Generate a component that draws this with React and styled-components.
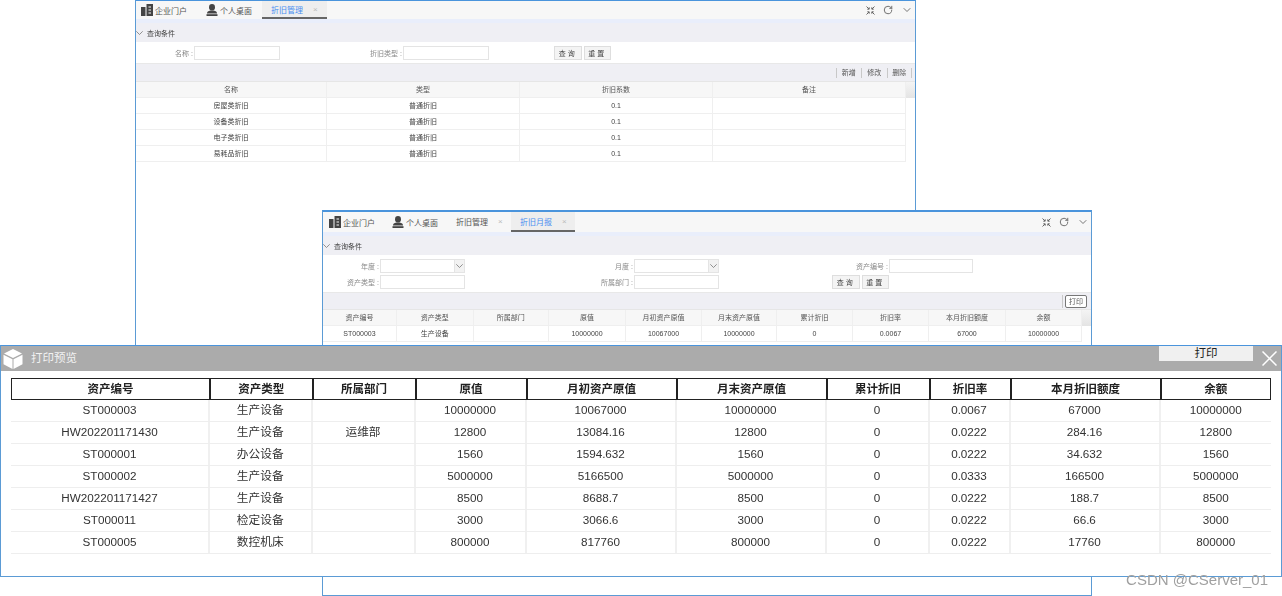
import React from "react";
import styled, { createGlobalStyle } from "styled-components";
import { ChevronDown, RotateCw } from "lucide-react";

const GlobalStyle = createGlobalStyle`
  html, body {
    margin: 0;
    padding: 0;
    background: #fff;
  }
  * {
    box-sizing: border-box;
  }
`;

const FONT = `"Liberation Sans", "Noto Sans CJK SC", sans-serif`;
const BLUE = "#5b9bd5";

const Desktop = styled.div`
  position: relative;
  width: 1282px;
  height: 596px;
  overflow: hidden;
  background: #fff;
  font-family: ${FONT};
`;

const Window = styled.div`
  position: absolute;
  left: ${(p) => p.$x}px;
  top: ${(p) => p.$y}px;
  width: ${(p) => p.$w}px;
  height: ${(p) => p.$h}px;
  display: flex;
  flex-direction: column;
  background: #fff;
  border: 1px solid ${BLUE};
  border-top: ${(p) => p.$topLine || 1}px solid #4a94dc;
  overflow: hidden;
`;

/* the screenshot was scaled down, so its small text is soft */
const WindowBody = styled.div`
  display: flex;
  flex-direction: column;
  flex: 1;
  filter: blur(${(p) => p.$blur}px);
`;

const TabBar = styled.div`
  display: flex;
  align-items: stretch;
  flex: none;
  height: ${(p) => p.$h}px;
  padding-left: ${(p) => p.$pad}px;
  background: #f7f7f7;
`;

const HomeTab = styled.div`
  display: flex;
  align-items: center;
  gap: 2px;
  margin-right: ${(p) => p.$gap}px;
  font-size: 8px;
  color: #555;
  white-space: nowrap;
`;

const Tab = styled.div`
  display: flex;
  align-items: center;
  width: ${(p) => p.$w}px;
  padding-left: 9px;
  font-size: 8px;
  white-space: nowrap;
  color: ${(p) => (p.$active ? "#4a8ff0" : "#555")};
  background: ${(p) => (p.$active ? "#eeeeee" : "transparent")};
  border-bottom: 2px solid ${(p) => (p.$active ? "#666" : "transparent")};
`;

const TabClose = styled.span`
  margin-left: 10px;
  font-size: 8px;
  color: #bbb;
`;

const TabTools = styled.div`
  display: flex;
  align-items: center;
  gap: 8px;
  margin-left: auto;
  padding-right: 2px;
  color: #666;
`;

const Stripe = styled.div`
  flex: none;
  height: 4px;
  background: #e9eefb;
`;

const SectionHead = styled.div`
  display: flex;
  align-items: center;
  flex: none;
  height: ${(p) => p.$h}px;
  gap: 4px;
  font-size: 7px;
  color: #444;
  background: #efeff4;
`;

const FormGrid = styled.div`
  display: grid;
  flex: none;
  grid-template-columns: ${(p) => p.$cols};
  grid-auto-rows: 14px;
  row-gap: 2px;
  align-content: center;
  height: ${(p) => p.$h}px;
  border-bottom: 1px solid #e8e8e8;
`;

const Field = styled.label`
  display: flex;
  align-items: center;
  justify-content: flex-end;
  gap: 1px;
  font-size: 7px;
  color: #888;
`;

const Input = styled.div`
  flex: none;
  width: ${(p) => p.$w}px;
  height: 14px;
  background: #fff;
  border: 1px solid #e4e4e4;
`;

const Select = styled(Input)`
  display: flex;
  justify-content: flex-end;
`;

const SelectArrow = styled.span`
  display: flex;
  align-items: center;
  justify-content: center;
  width: 10px;
  background: #f2f2f2;
  border-left: 1px solid #e4e4e4;
`;

const FormActions = styled.div`
  display: flex;
  gap: 2px;
  padding-left: ${(p) => p.$pad}px;
`;

const FormButton = styled.button`
  width: 27.5px;
  height: 14px;
  padding: 0;
  font-family: ${FONT};
  font-size: 7px;
  letter-spacing: 2px;
  color: #444;
  background: #f4f4f4;
  border: 1px solid #dedede;
`;

const Toolbar = styled.div`
  display: flex;
  align-items: center;
  justify-content: flex-end;
  flex: none;
  height: ${(p) => p.$h}px;
  padding-right: ${(p) => p.$pad}px;
  background: #efeff4;
  border-bottom: 1px solid #e6e6e6;
`;

const ToolLink = styled.span`
  width: 25.5px;
  height: 10px;
  font-size: 7px;
  line-height: 10px;
  text-align: center;
  color: #555;
  border-left: 1px solid #c8c8c8;
  &:last-child {
    border-right: 1px solid #c8c8c8;
  }
`;

const PrintTool = styled.div`
  display: flex;
  align-items: center;
  height: 13px;
  padding-left: 2px;
  border-left: 1px solid #c8c8c8;
`;

const PrintLink = styled.span`
  width: 22px;
  height: 13px;
  font-size: 7px;
  line-height: 11px;
  text-align: center;
  color: #555;
  background: #fff;
  border: 1px solid #777;
  border-radius: 2px;
`;

const GridWrap = styled.div`
  position: relative;
  flex: none;
`;

const ScrollCorner = styled.div`
  position: absolute;
  top: 0;
  right: 0;
  width: 9px;
  height: 16px;
  background: linear-gradient(#f4f4f4, #e4e4e4);
`;

const Row = styled.div`
  display: grid;
  grid-template-columns: ${(p) => p.$cols};
  width: max-content;
  height: 16px;
  background: ${(p) => (p.$head ? "#f7f7f7" : "#fff")};
  border-bottom: 1px solid #efefef;
`;

const Cell = styled.div`
  font-size: 7px;
  line-height: 16px;
  text-align: center;
  white-space: nowrap;
  color: ${(p) => (p.$head ? "#555" : "#444")};
  border-right: 1px solid #efefef;
`;

const ModalBar = styled.div`
  display: flex;
  align-items: flex-start;
  flex: none;
  height: 25px;
  color: #f2f2f2;
  background: #ababab;
`;

const ModalTitle = styled.div`
  align-self: center;
  margin: 0 0 3px 8px;
  font-size: 11.5px;
`;

const CubeIcon = styled.svg`
  align-self: center;
  flex: none;
  margin-left: 2px;
`;

const ModalPrint = styled.button`
  width: 94px;
  height: 16px;
  margin-left: auto;
  margin-top: -1px;
  padding: 0;
  font-family: ${FONT};
  font-size: 11.5px;
  line-height: 16px;
  color: #222;
  background: #f0f0f0;
  border: 0;
`;

const ModalClose = styled.div`
  display: flex;
  align-self: center;
  justify-content: center;
  width: 28px;
  padding-left: 4px;
`;

const PrintTable = styled.div`
  margin: 7px 10px 0;
`;

const PrintHead = styled.div`
  display: grid;
  grid-template-columns: ${(p) => p.$cols};
  height: 22px;
  border: 1px solid #222;
`;

const PrintHeadCell = styled.div`
  font-size: 11.5px;
  font-weight: 700;
  line-height: 21px;
  text-align: center;
  color: #222;
  border-right: 2px solid #222;
  &:last-child {
    border-right: 0;
  }
`;

const PrintRow = styled.div`
  display: grid;
  grid-template-columns: ${(p) => p.$cols};
  height: 22px;
  border-bottom: 1px solid #eee;
`;

const PrintCell = styled.div`
  font-size: 11.7px;
  line-height: 20px;
  text-align: center;
  white-space: nowrap;
  color: #333;
  border-right: 2px solid #f0f0f0;
  &:last-child {
    border-right: 0;
  }
`;

const Watermark = styled.div`
  position: absolute;
  right: 14px;
  top: 571px;
  font-family: ${FONT};
  font-size: 15px;
  color: #a0a0a0;
  white-space: nowrap;
`;

const BuildingIcon = () => (
  <svg width="12" height="12" viewBox="0 0 12 12" fill="#444">
    <path d="M0 3h4.500v9H0z" />
    <path d="M5.500 0H12v12H5.500z" />
    <path fill="#f7f7f7" d="M7.500 2.500h2.500v1H7.500zM7.500 5.500h2.500v1H7.500zM7.500 8.500h2.500v1H7.500z" />
  </svg>
);

const UserIcon = () => (
  <svg width="12" height="12" viewBox="0 0 12 12" fill="#444">
    <ellipse cx="6" cy="3.200" rx="3" ry="3.200" />
    <path d="M1 8.500c1-1.500 2.500-2 5-2s4 .5 5 2v1H1z" />
    <path d="M.5 10.200h11V12H.500z" />
  </svg>
);

const CompressIcon = () => (
  <svg width="9" height="9" viewBox="0 0 9 9" fill="none" stroke="#666" strokeWidth="1">
    <path d="M.5.500l2.500 2.500M3.200 1.300v1.900H1.300" />
    <path d="M8.500.500L6 3M5.800 1.300v1.900h1.900" />
    <path d="M.5 8.500L3 6M3.200 7.700V5.800H1.300" />
    <path d="M8.500 8.500L6 6M5.800 7.700V5.800h1.900" />
  </svg>
);

const SmallChevron = () => (
  <svg width="7" height="4" viewBox="0 0 7 4" fill="none" stroke="#777" strokeWidth="0.8">
    <path d="M.3.300l3.200 3.200L6.700.300" />
  </svg>
);

const Tools = () => (
  <TabTools>
    <CompressIcon />
    <RotateCw size={10} strokeWidth={2.2} />
    <ChevronDown size={12} strokeWidth={1.8} />
  </TabTools>
);

const DataRow = ({ cols, head, cells }) => (
  <Row $cols={cols} $head={head}>
    {cells.map((text, i) => (
      <Cell key={i} $head={head}>
        {text}
      </Cell>
    ))}
  </Row>
);

const DEPRECIATION_COLS = "191px 193px 193px 193px";
const DEPRECIATION_HEAD = ["名称", "类型", "折旧系数", "备注"];
const DEPRECIATION_ROWS = [
  ["房屋类折旧", "普通折旧", "0.1", ""],
  ["设备类折旧", "普通折旧", "0.1", ""],
  ["电子类折旧", "普通折旧", "0.1", ""],
  ["易耗品折旧", "普通折旧", "0.1", ""],
];

const REPORT_COLS = "74px 76.500px 75.500px 77px 76px 75px 76px 76px 77px 76px";
const REPORT_HEAD = [
  "资产编号",
  "资产类型",
  "所属部门",
  "原值",
  "月初资产原值",
  "月末资产原值",
  "累计折旧",
  "折旧率",
  "本月折旧额度",
  "余额",
];

const PRINT_COLS = "199px 102.500px 103px 111px 150px 150px 103px 81px 150px 1fr";
const PRINT_ROWS = [
  ["ST000003", "生产设备", "", "10000000", "10067000", "10000000", "0", "0.0067", "67000", "10000000"],
  ["HW202201171430", "生产设备", "运维部", "12800", "13084.16", "12800", "0", "0.0222", "284.16", "12800"],
  ["ST000001", "办公设备", "", "1560", "1594.632", "1560", "0", "0.0222", "34.632", "1560"],
  ["ST000002", "生产设备", "", "5000000", "5166500", "5000000", "0", "0.0333", "166500", "5000000"],
  ["HW202201171427", "生产设备", "", "8500", "8688.7", "8500", "0", "0.0222", "188.7", "8500"],
  ["ST000011", "检定设备", "", "3000", "3066.6", "3000", "0", "0.0222", "66.6", "3000"],
  ["ST000005", "数控机床", "", "800000", "817760", "800000", "0", "0.0222", "17760", "800000"],
];

function DepreciationWindow() {
  return (
    <Window $x={135} $y={0} $w={781} $h={400}>
      <WindowBody $blur={0.35}>
        <TabBar $h={18} $pad={5}>
          <HomeTab $gap={19}>
            <BuildingIcon />
            企业门户
          </HomeTab>
          <HomeTab $gap={10}>
            <UserIcon />
            个人桌面
          </HomeTab>
          <Tab $active $w={65}>
            折旧管理<TabClose>×</TabClose>
          </Tab>
          <Tools />
        </TabBar>
        <Stripe />
        <SectionHead $h={19}>
          <SmallChevron />
          查询条件
        </SectionHead>
        <FormGrid $cols="144px 209px auto" $h={22}>
          <Field>
            名称 :<Input $w={86} />
          </Field>
          <Field>
            折旧类型 :<Input $w={86} />
          </Field>
          <FormActions $pad={65}>
            <FormButton>查询</FormButton>
            <FormButton>重置</FormButton>
          </FormActions>
        </FormGrid>
        <Toolbar $h={18} $pad={3}>
          <ToolLink>新增</ToolLink>
          <ToolLink>修改</ToolLink>
          <ToolLink>删除</ToolLink>
        </Toolbar>
        <GridWrap>
          <ScrollCorner />
          <DataRow cols={DEPRECIATION_COLS} head cells={DEPRECIATION_HEAD} />
          {DEPRECIATION_ROWS.map((cells) => (
            <DataRow key={cells[0]} cols={DEPRECIATION_COLS} cells={cells} />
          ))}
        </GridWrap>
      </WindowBody>
    </Window>
  );
}

function ReportWindow() {
  return (
    <Window $x={322} $y={210} $w={770} $h={386} $topLine={2}>
      <WindowBody $blur={0.35}>
        <TabBar $h={20} $pad={6}>
          <HomeTab $gap={17}>
            <BuildingIcon />
            企业门户
          </HomeTab>
          <HomeTab $gap={9}>
            <UserIcon />
            个人桌面
          </HomeTab>
          <Tab $w={64}>
            折旧管理<TabClose>×</TabClose>
          </Tab>
          <Tab $active $w={64}>
            折旧月报<TabClose>×</TabClose>
          </Tab>
          <Tools />
        </TabBar>
        <Stripe />
        <SectionHead $h={19}>
          <SmallChevron />
          查询条件
        </SectionHead>
        <FormGrid $cols="142px 254px 254px" $h={38}>
          <Field>
            年度 :
            <Select $w={85}>
              <SelectArrow>
                <SmallChevron />
              </SelectArrow>
            </Select>
          </Field>
          <Field>
            月度 :
            <Select $w={85}>
              <SelectArrow>
                <SmallChevron />
              </SelectArrow>
            </Select>
          </Field>
          <Field>
            资产编号 :<Input $w={84} />
          </Field>
          <Field>
            资产类型 :<Input $w={85} />
          </Field>
          <Field>
            所属部门 :<Input $w={85} />
          </Field>
          <FormActions $pad={113}>
            <FormButton>查询</FormButton>
            <FormButton>重置</FormButton>
          </FormActions>
        </FormGrid>
        <Toolbar $h={17} $pad={4}>
          <PrintTool>
            <PrintLink>打印</PrintLink>
          </PrintTool>
        </Toolbar>
        <GridWrap>
          <ScrollCorner />
          <DataRow cols={REPORT_COLS} head cells={REPORT_HEAD} />
          <DataRow cols={REPORT_COLS} cells={PRINT_ROWS[0]} />
        </GridWrap>
      </WindowBody>
    </Window>
  );
}

function PrintPreview() {
  return (
    <Window $x={0} $y={345} $w={1282} $h={232}>
      <ModalBar>
        <CubeIcon width="20" height="20" viewBox="0 0 20 20">
          <path fill="#fff" d="M10 0l9 4.500L10 9 1 4.500z" />
          <path fill="#fff" d="M.5 5.700l9 4.500V20l-9-4.800z" />
          <path fill="#fff" d="M19.500 5.700l-9 4.500V20l9-4.800z" />
        </CubeIcon>
        <ModalTitle>打印预览</ModalTitle>
        <ModalPrint>打印</ModalPrint>
        <ModalClose>
          <svg width="15" height="15" viewBox="0 0 15 15" stroke="#fff" strokeWidth="1.500">
            <path d="M.5.500l14 14M14.500.500l-14 14" />
          </svg>
        </ModalClose>
      </ModalBar>
      <WindowBody $blur={0.2}>
        <PrintTable>
          <PrintHead $cols={PRINT_COLS}>
            {REPORT_HEAD.map((text) => (
              <PrintHeadCell key={text}>{text}</PrintHeadCell>
            ))}
          </PrintHead>
          {PRINT_ROWS.map((cells) => (
            <PrintRow key={cells[0]} $cols={PRINT_COLS}>
              {cells.map((text, i) => (
                <PrintCell key={i}>{text}</PrintCell>
              ))}
            </PrintRow>
          ))}
        </PrintTable>
      </WindowBody>
    </Window>
  );
}

export default function App() {
  return (
    <Desktop>
      <GlobalStyle />
      <DepreciationWindow />
      <ReportWindow />
      <PrintPreview />
      <Watermark>CSDN @CServer_01</Watermark>
    </Desktop>
  );
}
